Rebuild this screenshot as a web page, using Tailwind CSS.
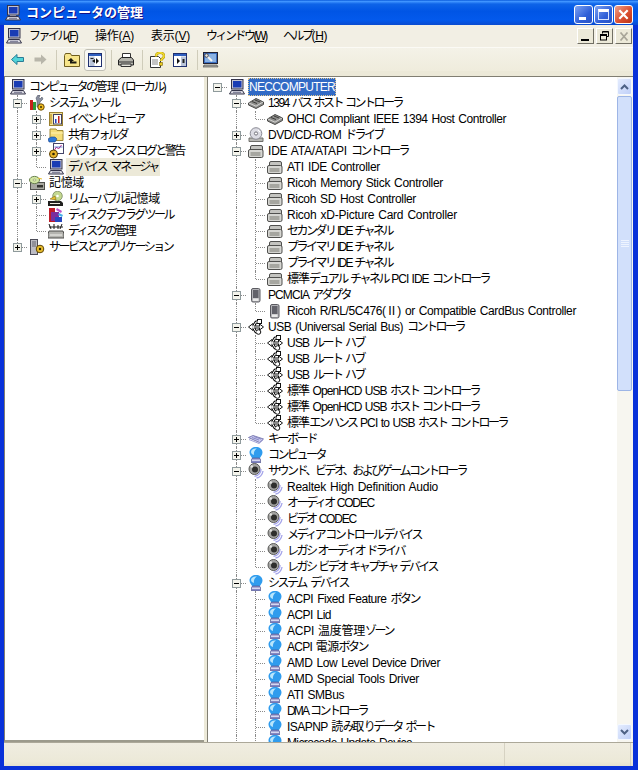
<!DOCTYPE html>
<html lang="ja">
<head>
  <meta charset="UTF-8">
  <title>コンピュータの管理</title>
  <script src="https://cdn.jsdelivr.net/npm/@tailwindcss/browser@4"></script>
</head>
<body class="w-[638px] h-[770px] overflow-hidden bg-[#0831d9] text-black text-[12px] font-['Liberation_Sans','Noto_Sans_CJK_JP',sans-serif]">
  <!-- icon set -->
  <svg class="hidden" xmlns="http://www.w3.org/2000/svg">
    <symbol id="i-computer" viewBox="0 0 16 16">
      <rect x="2.500" y="0.500" width="11.500" height="9.500" fill="#c4c4d2" stroke="#34344a"/>
      <rect x="4" y="2" width="8.500" height="6.500" fill="#1a3cb4"/>
      <rect x="5" y="10" width="6" height="1.500" fill="#8a8a9c"/>
      <path d="M2.500 11.500h11l2 3.500H.5z" fill="#d8d8e0" stroke="#34344a"/>
      <path d="M4 13.300h8" stroke="#70708a"/>
    </symbol>
    <symbol id="i-tools" viewBox="0 0 16 16">
      <rect x="1" y="5" width="3" height="10" fill="#c8201c"/>
      <rect x="4" y="7" width="3" height="8" fill="#2f9a38"/>
      <path d="M9 0l2 0-1 3 1 1 2-2 1 2-3 3-1 5H8V6L7 3z" fill="#8a8fa0" stroke="#404654" stroke-width=".5"/>
      <circle cx="12" cy="12" r="3.2" fill="#f0bc20" stroke="#6a4a08"/>
      <circle cx="12" cy="12" r="1" fill="#3a3008"/>
    </symbol>
    <symbol id="i-event" viewBox="0 0 16 16">
      <rect x="1.5" y="1.5" width="13" height="13" fill="#f2e29a" stroke="#9a8030"/>
      <rect x="5.5" y="3.5" width="8" height="9.5" fill="#fff" stroke="#404060"/>
      <rect x="7" y="8" width="1.5" height="4" fill="#2040c0"/>
      <rect x="10" y="5" width="1.5" height="7" fill="#c02020"/>
      <rect x="2" y="3" width="2" height="10" fill="#d0b050"/>
    </symbol>
    <symbol id="i-shared" viewBox="0 0 16 16">
      <path d="M2 2h6l1 1.500h6v10H2z" fill="#f4dc78" stroke="#a08a38"/>
      <path d="M3 6h12" stroke="#fff2b4"/>
      <path d="M0 12l3-2h4l2 2-2 3H1z" fill="#2c78d8" stroke="#14408c" stroke-width=".6"/>
    </symbol>
    <symbol id="i-perf" viewBox="0 0 16 16">
      <rect x="5.500" y="0.500" width="10" height="10" fill="#fff" stroke="#45456a"/>
      <path d="M6.500 7l2-3 2 2 3-4" fill="none" stroke="#c02a8a"/>
      <path d="M6.500 4h8" stroke="#2a50c0" stroke-width=".7"/>
      <circle cx="5.500" cy="11" r="4" fill="#e8b428" stroke="#5a4008"/>
      <circle cx="5.500" cy="11" r="1.300" fill="#2c2406"/>
    </symbol>
    <symbol id="i-storage" viewBox="0 0 16 16">
      <rect x="1.500" y="7.500" width="14" height="7" fill="#a8a8a0" stroke="#50504c"/>
      <rect x="8" y="10" width="6" height="2.500" fill="#33332e"/>
      <ellipse cx="5.500" cy="5" rx="5" ry="3.600" fill="#d4e8a4" stroke="#68804c"/>
      <ellipse cx="5.500" cy="5" rx="1.500" ry="1" fill="#f8f6d0" stroke="#68804c" stroke-width=".5"/>
      <path d="M9 3l4 1" stroke="#e8c030"/>
    </symbol>
    <symbol id="i-removable" viewBox="0 0 16 16">
      <path d="M0 10h13l2 2v3H0z" fill="#20201e"/>
      <rect x="2" y="12" width="10" height="1" fill="#f0ece0"/>
      <circle cx="9.500" cy="5" r="4.800" fill="#c4d890" stroke="#6c7c54" stroke-width=".7"/>
      <circle cx="9.500" cy="5" r="1.300" fill="#fff"/>
      <path d="M2 8l5-3 1 4z" fill="#e8c030" stroke="#705808" stroke-width=".5"/>
    </symbol>
    <symbol id="i-defrag" viewBox="0 0 16 16">
      <rect x="1" y="1" width="6" height="14" fill="#c01c28"/>
      <rect x="3" y="5" width="8" height="9" fill="#7b2e9c"/>
      <rect x="7" y="10" width="7" height="5" fill="#2848c0"/>
      <path d="M9 1l5 3-1 2-5-3z" fill="#c050c8"/>
      <path d="M11 6l4 2-1 2-4-2z" fill="#48b0e8"/>
    </symbol>
    <symbol id="i-diskmgmt" viewBox="0 0 16 16">
      <path d="M1 8h14l1 3v4H0v-4z" fill="#b4b4b0" stroke="#4c4c4a"/>
      <path d="M2 12h12" stroke="#f4f4f0"/>
      <path d="M1 1l2 5M6 1v5M10 2v4M14 1l-2 5M1 4h14" stroke="#1c1c1c" fill="none"/>
    </symbol>
    <symbol id="i-services" viewBox="0 0 16 16">
      <rect x="1.500" y="0.500" width="7" height="15" fill="#bcbcc4" stroke="#4c4c58"/>
      <path d="M3 3h4M3 5h4M3 7h4" stroke="#64646e"/>
      <circle cx="11" cy="10" r="3.800" fill="#e8bc2c" stroke="#5c4408"/>
      <circle cx="11" cy="10" r="1.200" fill="#2c2406"/>
    </symbol>
    <symbol id="i-disk" viewBox="0 0 16 16">
      <path d="M0.500 8L8 3.500l7.500 3.500v2.500L8 13.500 0.500 10z" fill="#8e8e8c" stroke="#4a4a48"/>
      <path d="M1 8l7 3.200L15 7" fill="none" stroke="#d4d4d2"/>
      <path d="M4 6.500l5 2M7 5l5 2" stroke="#3c3c3a"/>
    </symbol>
    <symbol id="i-dvd" viewBox="0 0 16 16">
      <path d="M1 11h14v3.500H1z" fill="#b8b8b4" stroke="#6e6e6a"/>
      <circle cx="8" cy="6.500" r="5.800" fill="#dcdce4" stroke="#8a8a94"/>
      <circle cx="8" cy="6.500" r="1.600" fill="#fff" stroke="#73737c"/>
      <path d="M10 3l2 2" stroke="#fff"/>
    </symbol>
    <symbol id="i-ide" viewBox="0 0 16 16">
      <rect x="2.500" y="2.500" width="12" height="6" rx="1.500" fill="#c4c4c0" stroke="#50504e"/>
      <rect x="0.500" y="6.500" width="14.500" height="8" rx="1.500" fill="#d6d6d2" stroke="#50504e"/>
      <path d="M2.500 10h10M2.500 12h10" stroke="#77776f"/>
    </symbol>
    <symbol id="i-pcmcia" viewBox="0 0 16 16">
      <rect x="3.500" y="1.500" width="8.500" height="13.500" rx="1.500" fill="#b4b4b8" stroke="#5a5a60"/>
      <rect x="5" y="3" width="5.500" height="8" fill="#62626a"/>
      <rect x="5" y="11.500" width="5.500" height="2.500" fill="#eaeaea"/>
    </symbol>
    <symbol id="i-usb" viewBox="0 0 16 16">
      <g fill="none" stroke="#111" stroke-width="3" stroke-linejoin="round">
        <path d="M3 8h10M5 8l3-5h3M5 8l3 5h2"/>
      </g>
      <path d="M.5 8L5 4.500v7z" fill="#fff" stroke="#111"/>
      <path d="M15.500 8L11.500 5v6z" fill="#fff" stroke="#111"/>
      <rect x="9.500" y="0.500" width="4" height="4" fill="#fff" stroke="#111"/>
      <circle cx="10.500" cy="13" r="2.300" fill="#fff" stroke="#111"/>
      <g fill="none" stroke="#fff" stroke-width="1">
        <path d="M3 8h10M5 8l3-5h3M5 8l3 5h2"/>
      </g>
    </symbol>
    <symbol id="i-keyboard" viewBox="0 0 16 16">
      <path d="M0.500 6.500L5 4.500l10.500 3.500-4 3.500z" fill="#c8c8f0" stroke="#8080b4"/>
      <path d="M4 6.500l7 2.500M6 5.500l7 2.500" stroke="#8a8ac4"/>
      <path d="M1 8.500l10 4 4-3.500" fill="none" stroke="#a4a4d8"/>
    </symbol>
    <symbol id="i-sysdev" viewBox="0 0 16 16">
      <path d="M1.500 5.500C1.500 2 4.500 0 8 0s6.500 2 6.500 5.500c0 2.500-2 4-3 6.500h-7c-1-2.500-3-4-3-6.500z" fill="#2f9cee"/>
      <path d="M3 5C3 2.500 6 1 9 1.500 6.500 3 5.500 5.500 6 8 4.500 7.500 3 6.500 3 5z" fill="#b8e6fc"/>
      <path d="M4.500 11h7l1 1.500V16h-9v-3.500z" fill="#8488c4" stroke="#4e5088" stroke-width=".6"/>
      <rect x="4" y="12.600" width="8" height="1.300" fill="#e0e2f6"/>
    </symbol>
    <symbol id="i-speaker" viewBox="0 0 16 16">
      <circle cx="6.500" cy="6" r="5.500" fill="#a4a4a2" stroke="#585856"/>
      <circle cx="7" cy="6.500" r="3" fill="#2e2e2c"/>
      <circle cx="3.800" cy="3.500" r="1.200" fill="#e4e4e2"/>
      <path d="M13 6c.2 3.800-3 7-6.500 7.300M15 8c-.5 3.700-3.500 6.500-6.500 7" fill="none" stroke="#a6a6ea" stroke-width="1.400"/>
    </symbol>
    <symbol id="i-up" viewBox="0 0 16 16">
      <path d="M0.500 3.500l1-2h5l1 2h8v11H0.500z" fill="#f7e58b" stroke="#6e5d1e"/>
      <path d="M7 6L3.500 9H6v2.500h6.500v-2H8V9h2z" fill="#1a1a12"/>
    </symbol>
    <symbol id="i-pane" viewBox="0 0 16 16">
      <rect x="1.500" y="1.500" width="13" height="13" fill="#fff" stroke="#1f2f6f"/>
      <rect x="2" y="2" width="12" height="2" fill="#2f5fc0"/>
      <rect x="2.500" y="4.500" width="5" height="9.500" fill="#b9c4d9"/>
      <rect x="3.500" y="6" width="3" height="1" fill="#222"/>
      <path d="M8 7l-3 2 3 2z" fill="#111"/>
      <path d="M9 6l3 3-3 3z" fill="#111"/>
    </symbol>
    <symbol id="i-actions" viewBox="0 0 16 16">
      <rect x="1.500" y="1.500" width="13" height="13" fill="#fff" stroke="#1f2f6f"/>
      <rect x="2" y="2" width="12" height="2" fill="#2f5fc0"/>
      <rect x="9" y="4.500" width="5" height="9.500" fill="#b9c4d9"/>
      <path d="M5 6l3 3-3 3z" fill="#111"/>
      <rect x="10.500" y="7" width="2" height="4" fill="#222"/>
    </symbol>
    <symbol id="i-print" viewBox="0 0 16 16">
      <path d="M4.500 1.500h8v5h-8z" fill="#fff" stroke="#333"/>
      <path d="M0.500 8l3-2.500h10l2 2.500v5h-15z" fill="#b5b5ad" stroke="#222"/>
      <path d="M1 10h14" stroke="#333"/>
      <path d="M3 12h10v2.500H3z" fill="#e5e5dd" stroke="#333"/>
    </symbol>
    <symbol id="i-help" viewBox="0 0 16 16">
      <path d="M1.500 4.500h8l2 2v9h-10z" fill="#fff" stroke="#333"/>
      <path d="M3 8h6M3 10h6M3 12h6" stroke="#888"/>
      <path d="M7 4.500c0-5 8-5 8-.5 0 2.500-3 2.500-3 5" fill="none" stroke="#b59a10" stroke-width="2.600"/>
      <path d="M7 4.500c0-5 8-5 8-.5 0 2.500-3 2.500-3 5" fill="none" stroke="#f7e030" stroke-width="1.400"/>
      <rect x="10.500" y="10.500" width="3" height="3" fill="#e8c820" stroke="#7a6810" stroke-width=".6"/>
    </symbol>
    <symbol id="i-mmc" viewBox="0 0 16 16">
      <rect x="0.500" y="0.500" width="14" height="11" fill="#3a6ec0" stroke="#223"/>
      <rect x="2" y="2" width="11" height="8" fill="#8ab2e4"/>
      <path d="M3 3l6 6" stroke="#f4f4f0" stroke-width="2"/>
      <circle cx="3.500" cy="3.500" r="1.800" fill="#e4e4dc" stroke="#445"/>
      <path d="M1 13h13l1 2H0z" fill="#a8a8a0" stroke="#555" stroke-width=".7"/>
    </symbol>
  </svg>

  <!-- title bar -->
  <header class="h-[25px] flex items-center pl-[5px] pr-[5px] bg-[linear-gradient(180deg,#0a5bdc_0%,#3f94ff_6%,#0e64e8_16%,#0055e5_45%,#0359ec_80%,#0a4bd0_100%)]">
    <svg class="w-4 h-4 shrink-0"><use href="#i-computer"/></svg>
    <span data-w="117" class="ml-[5px] text-[13px] font-bold text-white [text-shadow:1px_1px_#0f1089] whitespace-nowrap">コンピュータの管理</span>
    <div class="ml-auto flex gap-[1px] mt-[3px]">
      <button class="w-[19px] h-[19px] rounded-[3px] border border-white bg-[linear-gradient(135deg,#7ea3f2,#2f5fd8_60%,#2a52c4)] flex items-end pl-[4px] pb-[3px]">
        <span class="block w-[7px] h-[3px] bg-white"></span>
      </button>
      <button class="w-[19px] h-[19px] rounded-[3px] border border-white bg-[linear-gradient(135deg,#7ea3f2,#2f5fd8_60%,#2a52c4)] flex items-center justify-center">
        <span class="block w-[11px] h-[11px] border border-[#d8e4ff] border-t-[3px] border-t-white"></span>
      </button>
      <button class="w-[19px] h-[19px] rounded-[3px] border border-white bg-[linear-gradient(135deg,#f0a08a,#dc5030_55%,#b8331a)] flex items-center justify-center">
        <svg class="w-[13px] h-[13px]" viewBox="0 0 14 14"><path d="M2.500 2.500l9 9M11.500 2.500l-9 9" stroke="#fff" stroke-width="2.400"/></svg>
      </button>
    </div>
  </header>

  <div class="h-[741px] mr-[5px] ml-[4px] flex flex-col bg-[#ece9d8]">
    <!-- menu bar -->
    <nav class="h-[23px] shrink-0 flex items-center pl-[2px] bg-[#f2efe4] border-b border-[#fbfaf5]">
      <svg class="w-4 h-4 shrink-0"><use href="#i-computer"/></svg>
      <span class="ml-[7px]"><span data-w="48" class="inline-block whitespace-nowrap">ファイル(<u>F</u>)</span></span>
      <span class="ml-[18px]"><span data-w="39" class="inline-block whitespace-nowrap">操作(<u>A</u>)</span></span>
      <span class="ml-[17px]"><span data-w="39" class="inline-block whitespace-nowrap">表示(<u>V</u>)</span></span>
      <span class="ml-[16px]"><span data-w="60" class="inline-block whitespace-nowrap">ウィンドウ(<u>W</u>)</span></span>
      <span class="ml-[17px]"><span data-w="44" class="inline-block whitespace-nowrap">ヘルプ(<u>H</u>)</span></span>
      <div class="ml-auto mr-[1px] flex gap-[2px]">
        <button class="w-[17px] h-[16px] bg-[#ece9d8] border border-t-white border-l-white border-r-[#716f64] border-b-[#716f64] relative">
          <span class="absolute left-[3px] bottom-[2px] w-[8px] h-[2px] bg-black"></span>
        </button>
        <button class="w-[17px] h-[16px] bg-[#ece9d8] border border-t-white border-l-white border-r-[#716f64] border-b-[#716f64] flex items-center justify-center">
          <svg class="w-[11px] h-[10px]" viewBox="0 0 11 10"><path d="M3.500 2.500V.5h6v5H7.500" fill="none" stroke="#000"/><path d="M3.500 1h6" stroke="#000"/><rect x="1.500" y="3.500" width="6" height="5.500" fill="none" stroke="#000"/><path d="M1.500 4.500h6" stroke="#000"/></svg>
        </button>
        <button class="w-[17px] h-[16px] bg-[#ece9d8] border border-t-white border-l-white border-r-[#716f64] border-b-[#716f64] flex items-center justify-center">
          <svg class="w-[10px] h-[9px]" viewBox="0 0 10 9"><path d="M1.500 .5l7 8M8.500 .5l-7 8" stroke="#a8a598" stroke-width="1.700"/></svg>
        </button>
      </div>
    </nav>

    <!-- toolbar -->
    <div class="h-[23px] shrink-0 flex items-center pl-[2px] bg-[linear-gradient(180deg,#f4f2e8,#efecdc)]">
      <button class="w-[23px] h-[22px] flex items-center justify-center">
        <svg class="w-[13px] h-[11px]" viewBox="0 0 13 11"><path d="M.5 5.500L6 .5v3h6.500v4H6v3z" fill="#52d4d8" stroke="#2a7c96"/></svg>
      </button>
      <button class="w-[22px] h-[22px] flex items-center justify-center">
        <svg class="w-[13px] h-[11px]" viewBox="0 0 13 11"><path d="M12.500 5.500L7 .5v3H.5v4H7v3z" fill="#b8b6aa"/></svg>
      </button>
      <span class="ml-[5px] mr-[4px] w-px h-[20px] bg-[#cfccba]"></span>
      <button class="w-[22px] h-[22px] flex items-center justify-center"><svg class="w-4 h-4"><use href="#i-up"/></svg></button>
      <button class="ml-[1px] w-[22px] h-[22px] flex items-center justify-center rounded-[3px] bg-[#f8f8f4] border border-[#c0bfb5]"><svg class="w-4 h-4"><use href="#i-pane"/></svg></button>
      <span class="ml-[5px] mr-[3px] w-px h-[20px] bg-[#cfccba]"></span>
      <button class="w-[22px] h-[22px] flex items-center justify-center"><svg class="w-4 h-4"><use href="#i-print"/></svg></button>
      <span class="ml-[5px] mr-[3px] w-px h-[20px] bg-[#cfccba]"></span>
      <button class="w-[22px] h-[22px] flex items-center justify-center"><svg class="w-4 h-4"><use href="#i-help"/></svg></button>
      <button class="ml-[1px] w-[22px] h-[22px] flex items-center justify-center"><svg class="w-4 h-4"><use href="#i-actions"/></svg></button>
      <span class="ml-[6px] mr-[2px] w-px h-[20px] bg-[#cfccba]"></span>
      <button class="w-[22px] h-[22px] flex items-center justify-center"><svg class="w-4 h-4"><use href="#i-mmc"/></svg></button>
    </div>

    <!-- panes -->
    <div class="flex-1 min-h-0 flex mt-[5px] border-t border-[#807e72]">
      <div id="leftTree" class="w-[200px] shrink-0 bg-white border-l border-[#807e72] border-b-2 border-b-[#9c9a8c] pl-[3px] pt-[2px] overflow-hidden"></div>
      <div class="w-[3px] shrink-0"></div>
      <div class="flex-1 min-w-0 flex bg-white border-l border-[#807e72] overflow-hidden">
        <div id="rightTree" class="flex-1 min-w-0 pt-[2px] overflow-hidden"></div>
        <!-- scrollbar -->
        <div class="w-[16px] shrink-0 pr-[1px] bg-[#f7f6f0] flex flex-col items-stretch">
          <button class="h-[17px] mt-[1px] shrink-0 rounded-[2px] border border-[#f4f8ff] bg-[linear-gradient(135deg,#e4ecfe,#c0d0f8)] flex items-center justify-center">
            <svg class="w-[9px] h-[6px]" viewBox="0 0 9 6"><path d="M1 5l3.500-3.500L8 5" fill="none" stroke="#4d6185" stroke-width="2"/></svg>
          </button>
          <div class="h-[295px] mt-[1px] shrink-0 rounded-[2px] border border-[#9db5e6] bg-[#d2e0fb] flex flex-col items-center justify-center gap-[1px]">
            <span class="w-[8px] h-px bg-[#eef4ff]"></span>
            <span class="w-[8px] h-px bg-[#eef4ff]"></span>
            <span class="w-[8px] h-px bg-[#eef4ff]"></span>
            <span class="w-[8px] h-px bg-[#eef4ff]"></span>
          </div>
          <div class="flex-1"></div>
          <button class="h-[16px] mb-[2px] shrink-0 rounded-[2px] border border-[#f4f8ff] bg-[linear-gradient(135deg,#e4ecfe,#c0d0f8)] flex items-center justify-center">
            <svg class="w-[9px] h-[6px]" viewBox="0 0 9 6"><path d="M1 1l3.500 3.500L8 1" fill="none" stroke="#4d6185" stroke-width="2"/></svg>
          </button>
        </div>
      </div>
    </div>

    <!-- status bar -->
    <footer class="h-[24px] shrink-0 flex bg-[linear-gradient(180deg,#f0ede1,#ece9d8_80%,#e4e1cf)] border-t border-[#aca899]">
      <div class="w-[501px] border-r border-[#d6d2c2]"></div>
      <div class="w-[126px] border-r border-[#d6d2c2]"></div>
    </footer>
  </div>

  <script>
    // guides: one char per column. ' ' empty, '|' line, 'T' tee, 'L' end, 'E' stub beside a root box
    const left = [
      ['', '', 'computer', 'コンピュータの管理 (ローカル)', 137, 'root'],
      ['T', '-', 'tools', 'システム ツール', 70],
      ['|T', '+', 'event', 'イベント ビューア', 75],
      ['|T', '+', 'shared', '共有フォルダ', 59],
      ['|T', '+', 'perf', 'パフォーマンス ログと警告', 116],
      ['|L', '', 'computer', 'デバイス マネージャ', 90, 'soft'],
      ['T', '-', 'storage', '記憶域', 35],
      ['|T', '+', 'removable', 'リムーバブル記憶域', 92],
      ['|T', '', 'defrag', 'ディスク デフラグ ツール', 105],
      ['|L', '', 'diskmgmt', 'ディスクの管理', 67],
      ['L', '+', 'services', 'サービスとアプリケーション', 113]
    ];

    const right = [
      ['E', '-', 'computer', 'NECCOMPUTER', 86, 'sel'],
      [' T', '-', 'disk', '1394 バス ホスト コントローラ', 134],
      [' |L', '', 'disk', 'OHCI Compliant IEEE 1394 Host Controller', 219],
      [' T', '+', 'dvd', 'DVD/CD-ROM ドライブ', 115],
      [' T', '-', 'ide', 'IDE ATA/ATAPI コントローラ', 140],
      [' |T', '', 'ide', 'ATI IDE Controller', 93],
      [' |T', '', 'ide', 'Ricoh Memory Stick Controller', 156],
      [' |T', '', 'ide', 'Ricoh SD Host Controller', 129],
      [' |T', '', 'ide', 'Ricoh xD-Picture Card Controller', 170],
      [' |T', '', 'ide', 'セカンダリ IDE チャネル', 105],
      [' |T', '', 'ide', 'プライマリ IDE チャネル', 105],
      [' |T', '', 'ide', 'プライマリ IDE チャネル', 105],
      [' |L', '', 'ide', '標準デュアル チャネル PCI IDE コントローラ', 202],
      [' T', '-', 'pcmcia', 'PCMCIA アダプタ', 82],
      [' |L', '', 'pcmcia', 'Ricoh R/RL/5C476(Ⅱ) or Compatible CardBus Controller', 289],
      [' T', '-', 'usb', 'USB (Universal Serial Bus) コントローラ', 196],
      [' |T', '', 'usb', 'USB ルート ハブ', 77],
      [' |T', '', 'usb', 'USB ルート ハブ', 77],
      [' |T', '', 'usb', 'USB ルート ハブ', 77],
      [' |T', '', 'usb', '標準 OpenHCD USB ホスト コントローラ', 192],
      [' |T', '', 'usb', '標準 OpenHCD USB ホスト コントローラ', 192],
      [' |L', '', 'usb', '標準エンハンス PCI to USB ホスト コントローラ', 220],
      [' T', '+', 'keyboard', 'キーボード', 48],
      [' T', '+', 'sysdev', 'コンピュータ', 53],
      [' T', '-', 'speaker', 'サウンド、ビデオ、およびゲーム コントローラ', 195],
      [' |T', '', 'speaker', 'Realtek High Definition Audio', 151],
      [' |T', '', 'speaker', 'オーディオ CODEC', 87],
      [' |T', '', 'speaker', 'ビデオ CODEC', 69],
      [' |T', '', 'speaker', 'メディア コントロール デバイス', 134],
      [' |T', '', 'speaker', 'レガシ オーディオ ドライバ', 117],
      [' |L', '', 'speaker', 'レガシ ビデオ キャプチャ デバイス', 150],
      [' T', '-', 'sysdev', 'システム デバイス', 80],
      [' |T', '', 'sysdev', 'ACPI Fixed Feature ボタン', 132],
      [' |T', '', 'sysdev', 'ACPI Lid', 44],
      [' |T', '', 'sysdev', 'ACPI 温度管理ゾーン', 106],
      [' |T', '', 'sysdev', 'ACPI 電源ボタン', 80],
      [' |T', '', 'sysdev', 'AMD Low Level Device Driver', 153],
      [' |T', '', 'sysdev', 'AMD Special Tools Driver', 132],
      [' |T', '', 'sysdev', 'ATI SMBus', 57],
      [' |T', '', 'sysdev', 'DMA コントローラ', 80],
      [' |T', '', 'sysdev', 'ISAPNP 読み取りデータ ポート', 147],
      [' |T', '', 'sysdev', 'Microcode Update Device', 125]
    ];

    const vFull = '<span class="absolute left-[9px] top-0 h-4 border-l border-dotted border-[#8a8a8a]"></span>';
    const vHalf = '<span class="absolute left-[9px] top-0 h-2 border-l border-dotted border-[#8a8a8a]"></span>';
    const hStub = '<span class="absolute left-[10px] top-2 w-[9px] border-t border-dotted border-[#8a8a8a]"></span>';

    function expander(sign) {
      const bar = sign === '+' ? '<span class="absolute left-[3px] top-[1px] w-px h-[5px] bg-black"></span>' : '';
      return '<span class="absolute left-[5px] top-[4px] w-[9px] h-[9px] bg-[#f4f4ec] border border-[#8f9a9c]">' +
        '<span class="absolute left-[1px] top-[3px] w-[5px] h-px bg-black"></span>' + bar + '</span>';
    }

    function rowHtml([guides, sign, icon, text, width, mark]) {
      let cells = '';
      [...guides].forEach((g, i) => {
        let inner = '';
        if (g === '|') inner = vFull;
        if (g === 'T') inner = vFull + hStub;
        if (g === 'L') inner = vHalf + hStub;
        if (g === 'E') inner = hStub;
        if (i === guides.length - 1 && sign) inner += expander(sign);
        cells += '<span class="relative w-[19px] h-4 shrink-0">' + inner + '</span>';
      });
      let label = 'ml-[3px] shrink-0 whitespace-nowrap';
      if (mark === 'root') label = 'ml-[2px] shrink-0 whitespace-nowrap';
      if (mark === 'sel') label = 'ml-[2px] px-[1px] shrink-0 whitespace-nowrap bg-[#316ac5] text-white outline-1 outline-dotted outline-offset-[-1px] outline-[#e0c890]';
      if (mark === 'soft') label = 'ml-[1px] px-[2px] shrink-0 whitespace-nowrap bg-[#ece9d8]';
      return '<div class="flex items-center h-4">' + cells +
        '<span class="relative w-[19px] h-4 shrink-0 flex justify-center"><svg class="w-4 h-4"><use href="#i-' + icon + '"/></svg></span>' +
        '<span class="' + label + '"><span data-w="' + width + '" class="inline-block whitespace-nowrap leading-4">' + text + '</span></span></div>';
    }

    document.getElementById('leftTree').innerHTML = left.map(rowHtml).join('');
    document.getElementById('rightTree').innerHTML = right.map(rowHtml).join('');

    const kana = /[\u3001\u3041-\u30ff]+/g;
    document.querySelectorAll('[data-w]').forEach(el => {
      el.style.wordSpacing = '1px';
      [...el.childNodes].forEach(node => {
        if (node.nodeType !== 3) return;
        const holder = document.createElement('span');
        holder.innerHTML = node.textContent.replace(kana, m => '<span data-kana>' + m + '</span>');
        node.replaceWith(...holder.childNodes);
      });
    });

    function fitText() {
      document.querySelectorAll('[data-w]').forEach(el => {
        const target = Number(el.dataset.w);
        const runs = [...el.querySelectorAll('[data-kana]')];
        el.style.letterSpacing = '0';
        runs.forEach(r => r.style.letterSpacing = '0');
        const natural = el.getBoundingClientRect().width;
        const kanaCount = runs.reduce((n, r) => n + r.textContent.length, 0);
        const spacing = kanaCount ? Math.max((target - natural) / kanaCount, -2.5) : 0;
        runs.forEach(r => r.style.letterSpacing = spacing + 'px');
        // whatever the kana could not take goes to the rest of the text
        const rest = el.textContent.length - kanaCount;
        if (rest) el.style.letterSpacing = ((target - el.getBoundingClientRect().width) / rest) + 'px';
      });
    }
    window.addEventListener('load', fitText);
    document.fonts.ready.then(fitText);
  </script>
</body>
</html>
